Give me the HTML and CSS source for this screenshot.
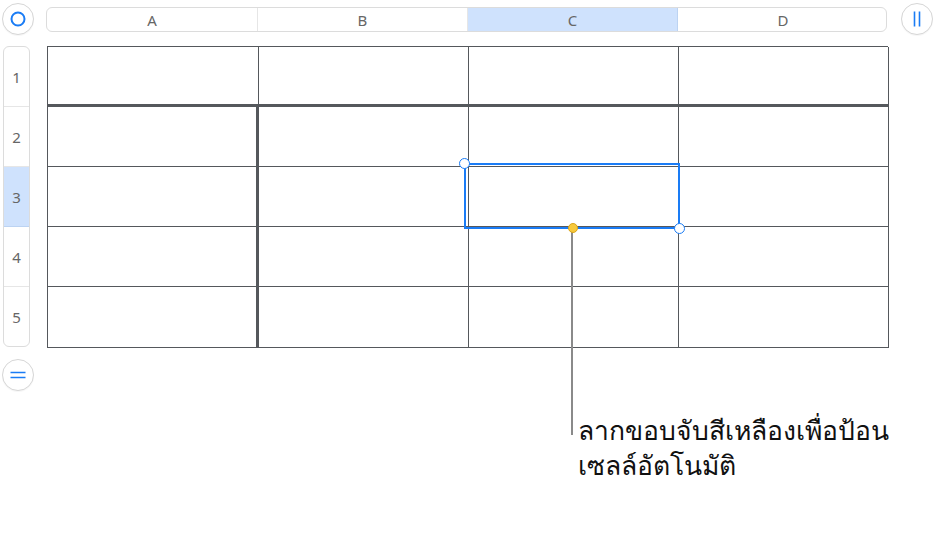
FILE: index.html
```html
<!DOCTYPE html>
<html lang="th">
<head>
  <meta charset="UTF-8" />
  <meta name="viewport" content="width=device-width, initial-scale=1.0"/>
  <title>ป้อนเซลล์อัตโนมัติ</title>
  <link rel="stylesheet" href="styles.css">
</head>
<body>
  <div class="sheet">
    <!-- select whole table -->
    <button class="round-btn">
      <svg width="18" height="18" viewBox="0 0 18 18"><circle cx="9" cy="9" r="6.5" fill="none" stroke="#1a7cf5" stroke-width="2"/></svg>
    </button>

    <div class="col-headers">
      <div class="col-head">A</div>
      <div class="col-head">B</div>
      <div class="col-head active">C</div>
      <div class="col-head">D</div>
    </div>

    <!-- add column -->
    <button class="round-btn">
      <svg width="18" height="18" viewBox="0 0 18 18"><path d="M6.5 1.5v15M11.5 1.5v15" stroke="#1a7cf5" stroke-width="1.6"/></svg>
    </button>

    <div class="row-headers">
      <div class="row-head">1</div>
      <div class="row-head">2</div>
      <div class="row-head active">3</div>
      <div class="row-head">4</div>
      <div class="row-head">5</div>
    </div>

    <div class="table-wrap">
      <div class="grid">
        <div class="cell head-row"></div><div class="cell head-row"></div><div class="cell head-row"></div><div class="cell head-row"></div>
        <div class="cell head-col"></div><div class="cell"></div><div class="cell"></div><div class="cell"></div>
        <div class="cell head-col"></div><div class="cell"></div><div class="cell"></div><div class="cell"></div>
        <div class="cell head-col"></div><div class="cell"></div><div class="cell"></div><div class="cell"></div>
        <div class="cell head-col"></div><div class="cell"></div><div class="cell"></div><div class="cell"></div>
      </div>

      <!-- selected range with its handles -->
      <div class="selection">
        <span class="handle top-left"></span>
        <span class="handle bottom-right"></span>
        <span class="fill-handle"></span>
      </div>
      <div class="leader"></div>
    </div>

    <div></div>

    <!-- add row -->
    <button class="round-btn">
      <svg width="18" height="18" viewBox="0 0 18 18"><path d="M1.5 6.5h15M1.5 11.5h15" stroke="#1a7cf5" stroke-width="1.6"/></svg>
    </button>
  </div>

  <p class="callout">ลากขอบจับสีเหลืองเพื่อป้อน<br>เซลล์อัตโนมัติ</p>
</body>
</html>
```

FILE: styles.css
```css
body {
  margin: 0;
  background-color: #fff;
  font-family: 'Noto Sans', 'Liberation Sans', sans-serif;
  color: #222;
}

.sheet {
  display: grid;
  grid-template-columns: 44px 841px 1fr;
  grid-template-rows: 31px 301px 31px;
  row-gap: 12px;
  padding: 3px 0 0 2px;
  align-items: start;
}

.round-btn {
  width: 32px;
  height: 32px;
  padding: 0;
  border: 1px solid #d6d6d6;
  border-radius: 50%;
  background-color: #fff;
  box-shadow: 0 1px 1px rgba(0,0,0,0.04);
  display: flex;
  align-items: center;
  justify-content: center;
}

.sheet > .round-btn:nth-child(3) {
  margin-left: 14px;
}

.col-headers {
  margin-top: 4px;
  height: 25px;
  display: grid;
  grid-template-columns: 211px 210px 210px 210px;
  border: 1px solid #dcdcdc;
  border-radius: 6px;
  box-sizing: border-box;
  overflow: hidden;
}

.col-head {
  display: flex;
  align-items: center;
  justify-content: center;
  font-size: 15px;
  color: #666;
  border-right: 1px solid #e6e6e6;
}

.col-head:last-child {
  border-right: none;
}

.col-head.active {
  background-color: #cfe2fd;
  border-right-color: #bcd3f2;
}

.row-headers {
  margin-left: 1px;
  width: 27px;
  height: 301px;
  border: 1px solid #dcdcdc;
  border-radius: 6px;
  box-sizing: border-box;
  overflow: hidden;
  display: grid;
  grid-template-rows: 60px 60px 60px 60px 1fr;
}

.row-head {
  display: flex;
  align-items: center;
  justify-content: center;
  font-size: 15px;
  color: #666;
  border-bottom: 1px solid #e6e6e6;
}

.row-head:last-child {
  border-bottom: none;
}

.row-head.active {
  background-color: #cfe2fd;
  border-bottom-color: #bcd3f2;
}

.table-wrap {
  position: relative;
  margin-left: 1px;
}

.grid {
  display: grid;
  grid-template-columns: 211px 210px 210px 210px;
  grid-template-rows: 60px 60px 60px 60px 61px;
  border-left: 1.5px solid #55585c;
  border-top: 1.5px solid #55585c;
  box-sizing: border-box;
  width: 841px;
}

.cell {
  border-right: 1.5px solid #55585c;
  border-bottom: 1.5px solid #55585c;
}

.cell.head-row {
  border-bottom: 3px solid #55585c;
}

.cell.head-col {
  border-right: 3px solid #55585c;
}

.selection {
  position: absolute;
  left: 417px;
  top: 117px;
  width: 216px;
  height: 66px;
  border: 2px solid #1a7cf5;
  box-sizing: border-box;
}

.handle {
  position: absolute;
  width: 11px;
  height: 11px;
  border: 1.5px solid #1a7cf5;
  border-radius: 50%;
  background-color: #fff;
  box-sizing: border-box;
}

.handle.top-left {
  left: -7px;
  top: -7px;
}

.handle.bottom-right {
  right: -7px;
  bottom: -7px;
}

.fill-handle {
  position: absolute;
  left: 102px;
  bottom: -6px;
  width: 10px;
  height: 10px;
  border: 1px solid #d8a51d;
  border-radius: 50%;
  background-color: #f7c93c;
  box-sizing: border-box;
  z-index: 1;
}

.leader {
  position: absolute;
  left: 524px;
  top: 183px;
  width: 2px;
  height: 206px;
  background-color: #8a8a8a;
}

.callout {
  margin: 23px 0 0 578px;
  font-size: 26.5px;
  line-height: 35px;
  color: #111;
}
```
